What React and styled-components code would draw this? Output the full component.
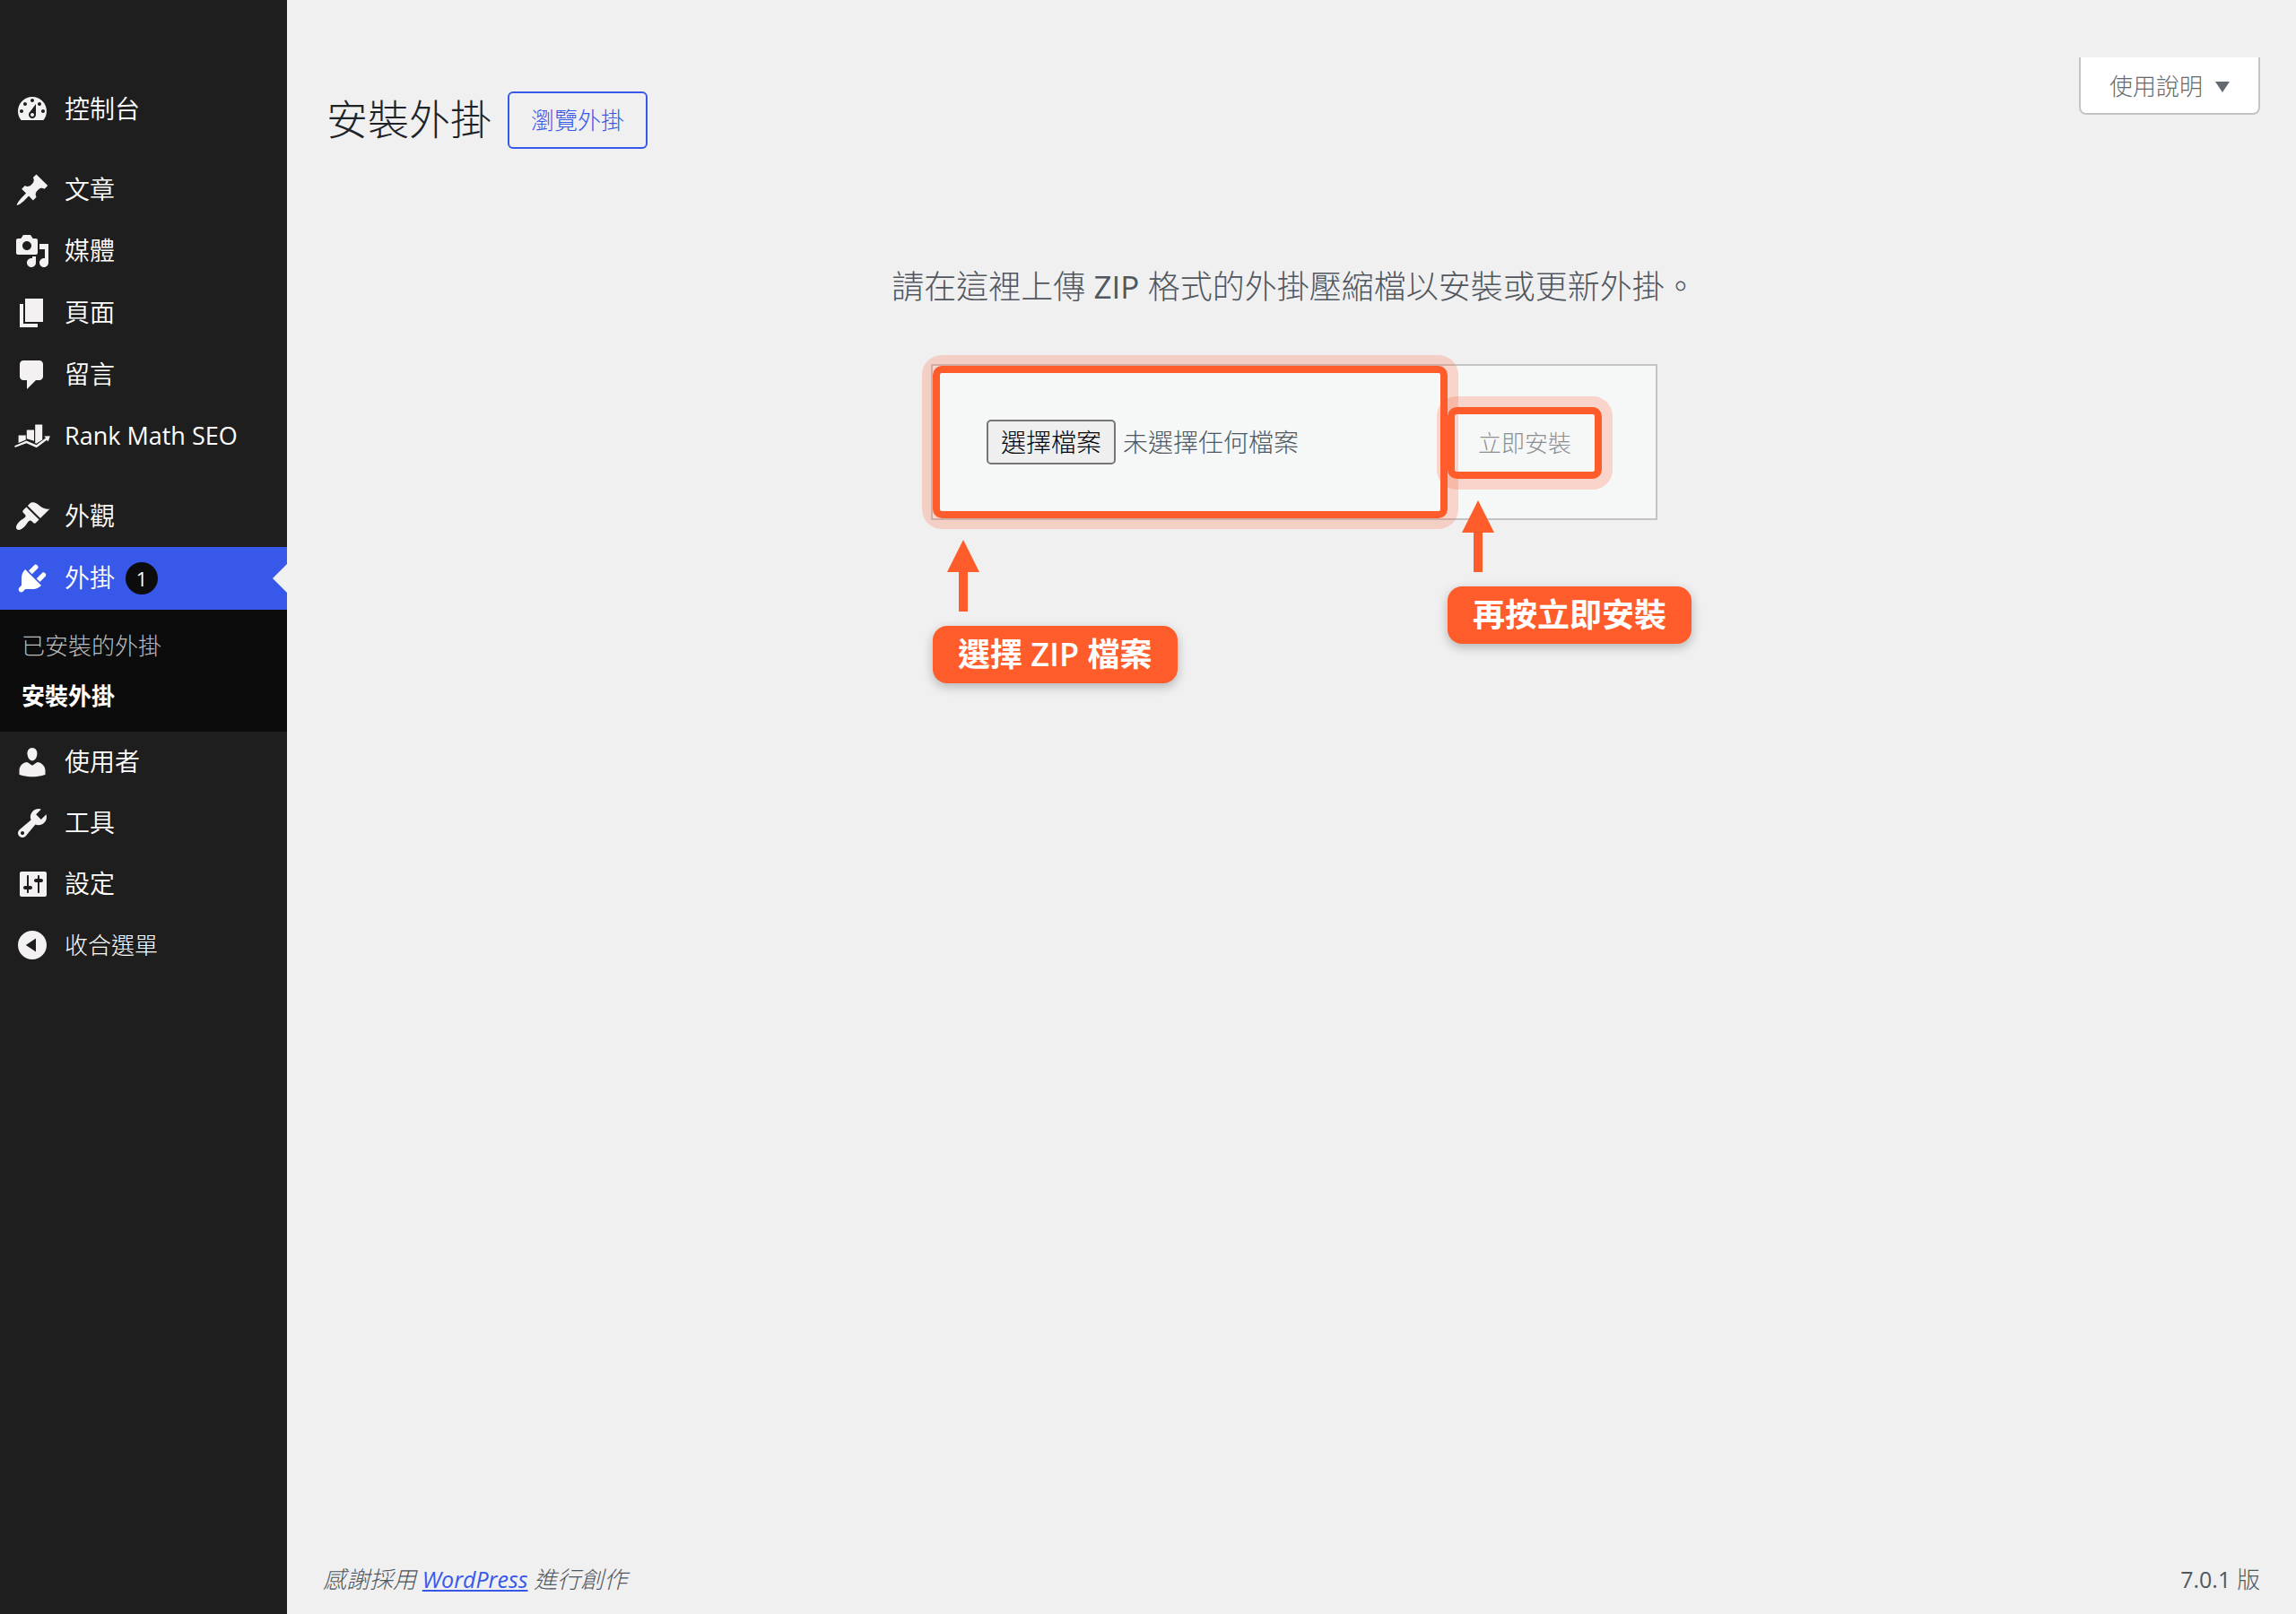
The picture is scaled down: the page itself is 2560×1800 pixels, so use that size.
import React, { useRef } from 'react';
import styled, { createGlobalStyle, css } from 'styled-components';

const icons = {
  dashboard: 'M3.76 16h12.48c1.1-1.37 1.76-3.11 1.76-5 0-4.42-3.58-8-8-8s-8 3.58-8 8c0 1.89.66 3.63 1.76 5zM10 4c.55 0 1 .45 1 1s-.45 1-1 1-1-.45-1-1 .45-1 1-1zM6 6c.55 0 1 .45 1 1s-.45 1-1 1-1-.45-1-1 .45-1 1-1zm8 0c.55 0 1 .45 1 1s-.45 1-1 1-1-.45-1-1 .45-1 1-1zm-5.37 5.55L12 7v6c0 1.1-.9 2-2 2s-2-.9-2-2c0-.57.24-1.08.63-1.45zM4 10c.55 0 1 .45 1 1s-.45 1-1 1-1-.45-1-1 .45-1 1-1zm12 0c.55 0 1 .45 1 1s-.45 1-1 1-1-.45-1-1 .45-1 1-1zm-5 3c0-.55-.45-1-1-1s-1 .45-1 1 .45 1 1 1 1-.45 1-1z',
  post: 'M10.44 3.02l1.82-1.82 6.36 6.35-1.83 1.82c-1.05-.68-2.48-.57-3.41.36l-.75.75c-.92.93-1.04 2.35-.35 3.41l-1.83 1.82-2.41-2.41-2.8 2.79c-.42.42-3.38 2.71-3.8 2.29s1.86-3.39 2.28-3.81l2.79-2.79L4.1 9.36l1.83-1.82c1.05.69 2.48.57 3.4-.36l.75-.75c.93-.92 1.05-2.35.36-3.41z',
  media: 'M13 11V4c0-.55-.45-1-1-1h-1.67L9 1H5L3.67 3H2c-.55 0-1 .45-1 1v7c0 .55.45 1 1 1h10c.55 0 1-.45 1-1zM7 4.5c1.38 0 2.5 1.12 2.5 2.5S8.38 9.5 7 9.5 4.5 8.38 4.5 7 5.62 4.5 7 4.5zM14 6h5v10.5c0 1.38-1.12 2.5-2.5 2.5S14 17.88 14 16.5s1.12-2.5 2.5-2.5c.17 0 .34.02.5.05V9h-3V6zm-4 8.05V13h2v3.5c0 1.38-1.12 2.5-2.5 2.5S7 17.88 7 16.5 8.12 14 9.5 14c.17 0 .34.02.5.05z',
  page: 'M6 15V2h10v13H6zm-1 1h8v2H3V5h2v11z',
  comments: 'M5 2h9c1.1 0 2 .9 2 2v7c0 1.1-.9 2-2 2h-2l-5 5v-5H5c-1.1 0-2-.9-2-2V4c0-1.1.9-2 2-2z',
  rankMath: 'M2.3 9.7h4.1v2.5L2.3 14zM6.9 6.7h4.1v6.2L6.9 11.6zM11.6 3.8h4v8.4l-3.4 2.2-.6-.3zM.1 15.6l6.6-2.9 5.6 2.4 5.2-3.9-.9-.9 3.3-.2-1 3.1-.8-.8-5.7 4.2-5.7-2.5L.4 16.5z',
  appearance: 'M14.48 11.06L7.41 3.99l1.5-1.5c.5-.56 2.3-.47 3.51.32 1.21.8 1.43 1.28 2.91 2.1 1.18.64 2.45 1.26 4.45.85zm-.71.71L6.7 4.7 4.93 6.47c-.39.39-.39 1.02 0 1.41l1.06 1.06c.39.39.39 1.03 0 1.42-.6.6-1.43 1.11-2.21 1.69-.35.26-.7.53-1.01.84C1.43 14.23.4 16.08 1.4 17.07c.99 1 2.84-.03 4.18-1.36.31-.31.58-.66.85-1.02.57-.78 1.08-1.61 1.69-2.21.39-.39 1.02-.39 1.41 0l1.06 1.06c.39.39 1.02.39 1.41 0z',
  plugins: 'M13.11 4.36L9.87 7.6 8 5.73l3.24-3.24c.35-.34 1.05-.2 1.56.32.52.51.66 1.21.31 1.55zm-8 1.77l.91-1.12 9.01 9.01-1.19.84c-.71.71-2.63 1.16-3.82 1.16H6.14L4.9 17.26c-.59.59-1.54.59-2.12 0-.59-.58-.59-1.53 0-2.12l1.24-1.24v-3.88c0-1.13.4-3.19 1.09-3.89zm7.26 3.97l3.24-3.24c.34-.35 1.04-.21 1.55.31.52.51.66 1.21.31 1.55l-3.24 3.25z',
  users: 'M10 9.25c-2.27 0-2.73-3.44-2.73-3.44C7 4.02 7.82 2 9.97 2c2.16 0 2.98 2.02 2.71 3.81 0 0-.41 3.44-2.68 3.44zm0 2.57L12.72 10c2.39 0 4.52 2.33 4.52 4.53v2.49s-3.65 1.13-7.24 1.13c-3.65 0-7.24-1.13-7.24-1.13v-2.49c0-2.25 1.94-4.48 4.47-4.48z',
  tools: 'M16.68 9.77c-1.34 1.34-3.3 1.67-4.95.99l-5.41 6.52c-.99.99-2.59.99-3.58 0s-.99-2.59 0-3.57l6.52-5.42c-.68-1.65-.35-3.61.99-4.95 1.28-1.28 3.12-1.62 4.72-1.06l-2.89 2.89 2.82 2.82 2.86-2.87c.53 1.58.18 3.39-1.08 4.65zM3.81 16.21c.4.39 1.04.39 1.43 0 .4-.4.4-1.04 0-1.43-.39-.4-1.03-.4-1.43 0-.39.39-.39 1.03 0 1.43z',
  settings: 'M18 16V4c0-.55-.45-1-1-1H4c-.55 0-1 .45-1 1v12c0 .55.45 1 1 1h13c.55 0 1-.45 1-1zM8 11h1c.55 0 1 .45 1 1s-.45 1-1 1H8v1.5c0 .28-.22.5-.5.5s-.5-.22-.5-.5V13H6c-.55 0-1-.45-1-1s.45-1 1-1h1V5.5c0-.28.22-.5.5-.5s.5.22.5.5V11zm5-2h-1c-.55 0-1-.45-1-1s.45-1 1-1h1V5.5c0-.28.22-.5.5-.5s.5.22.5.5V7h1c.55 0 1 .45 1 1s-.45 1-1 1h-1v5.5c0 .28-.22.5-.5.5s-.5-.22-.5-.5V9z',
  collapse: 'M10 2c4.42 0 8 3.58 8 8s-3.58 8-8 8-8-3.58-8-8 3.58-8 8-8zm2 11.7V6.3L6.4 10z',
};

const topItems = [
  { label: '文章', icon: 'post' },
  { label: '媒體', icon: 'media' },
  { label: '頁面', icon: 'page', tall: true },
  { label: '留言', icon: 'comments' },
  { label: <Latin $size={27}>Rank Math SEO</Latin>, icon: 'rankMath' },
];

const bottomItems = [
  { label: '使用者', icon: 'users' },
  { label: '工具', icon: 'tools' },
  { label: '設定', icon: 'settings' },
];

// the light weight is only meant for the Chinese text
function Latin({ $size, children }) {
  return <LatinText $size={$size}>{children}</LatinText>;
}

const Icon = ({ name }) => (
  <IconBox viewBox="0 0 20 20" aria-hidden="true">
    <path d={icons[name]} fillRule="evenodd" />
  </IconBox>
);

const MenuItem = ({ label, icon, tall, current, count, children }) => (
  <li>
    <MenuLink href="#" $tall={tall} $current={current}>
      <Icon name={icon} />
      <MenuText>{label}</MenuText>
      {count && <Count>{count}</Count>}
    </MenuLink>
    {children}
  </li>
);

const Callout = ({ children }) => (
  <CalloutBox>
    <Arrow viewBox="0 0 36 80" aria-hidden="true">
      <path d="M18 0L36 36H23V80H13V36H0z" />
    </Arrow>
    <CalloutText>{children}</CalloutText>
  </CalloutBox>
);

const App = () => {
  const fileInput = useRef(null);

  return (
    <>
      <GlobalStyle />
      <Page>
        <Sidebar>
          <Menu>
            <MenuItem label="控制台" icon="dashboard" />
            <Separator />
            {topItems.map((item) => <MenuItem key={item.icon} {...item} />)}
            <Separator />
            <MenuItem label="外觀" icon="appearance" />
            <MenuItem label="外掛" icon="plugins" count={1} current tall>
              <Submenu>
                <li><SubLink href="#">已安裝的外掛</SubLink></li>
                <li><SubLink href="#" $current>安裝外掛</SubLink></li>
              </Submenu>
            </MenuItem>
            {bottomItems.map((item) => <MenuItem key={item.icon} {...item} />)}
            <li>
              <CollapseButton type="button">
                <Icon name="collapse" />
                收合選單
              </CollapseButton>
            </li>
          </Menu>
        </Sidebar>

        <Main>
          <Header>
            <TitleGroup>
              <h1>安裝外掛</h1>
              <BrowseLink href="#">瀏覽外掛</BrowseLink>
            </TitleGroup>
            <HelpButton type="button">
              使用說明
              <Caret viewBox="0 0 16 12" aria-hidden="true">
                <path d="M0 0H16L8 12z" />
              </Caret>
            </HelpButton>
          </Header>

          <Upload>
            <Intro>請在這裡上傳 <Latin $size={35}>ZIP</Latin> 格式的外掛壓縮檔以安裝或更新外掛。</Intro>
            <UploadForm onSubmit={(e) => e.preventDefault()}>
              <FileFrame>
                <input type="file" accept=".zip" aria-label="外掛 ZIP 檔案" ref={fileInput} hidden />
                <ChooseButton type="button" onClick={() => fileInput.current.click()}>選擇檔案</ChooseButton>
                <span>未選擇任何檔案</span>
                <Callout>選擇 ZIP 檔案</Callout>
              </FileFrame>
              <InstallFrame>
                <InstallButton type="submit" disabled>立即安裝</InstallButton>
                <Callout>再按立即安裝</Callout>
              </InstallFrame>
            </UploadForm>
          </Upload>

          <Footer>
            <em>感謝採用 <a href="#"><Latin $size={25}>WordPress</Latin></a> 進行創作</em>
            <span><Latin $size={25}>7.0.1</Latin> 版</span>
          </Footer>
        </Main>
      </Page>
    </>
  );
};

export default App;

const GlobalStyle = createGlobalStyle`
  * {
    box-sizing: border-box;
  }

  body {
    margin: 0;
    background: #f0f0f0;
    color: #50575e;
    font-family: 'Open Sans', 'Noto Sans CJK TC', sans-serif;
    font-size: 26px;
    font-weight: 300;
    line-height: 38px;
  }

  button {
    font: inherit;
    cursor: pointer;
  }

  ul {
    list-style: none;
    margin: 0;
    padding: 0;
  }
`;

const LatinText = styled.span`
  font-size: ${({ $size }) => $size}px;
  font-weight: 400;
`;

const Page = styled.div`
  display: flex;
  min-height: 100vh;
`;

const Sidebar = styled.nav`
  flex: 0 0 320px;
  padding-top: 88px;
  background: #1e1e1e;
`;

const Menu = styled.ul`
  color: #fff;
`;

const Separator = styled.li`
  height: 22px;
`;

const menuRow = css`
  display: flex;
  align-items: center;
  width: 100%;
  height: 68px;
  padding: 0 16px;
  color: #fff;
  text-decoration: none;
`;

const MenuLink = styled.a`
  ${menuRow}
  font-size: 28px;
  font-weight: 350;

  ${({ $tall }) => $tall && 'height: 70px;'}

  ${({ $current }) => $current && css`
    position: relative;
    background: #3858e9;

    &::after {
      content: '';
      position: absolute;
      right: 0;
      top: calc(50% - 16px);
      border: 16px solid transparent;
      border-left: 0;
      border-right-color: #f0f0f0;
    }

    svg {
      fill: #fff;
    }
  `}
`;

const MenuText = styled.span`
  padding-bottom: 2px;
`;

const CollapseButton = styled.button`
  ${menuRow}
  border: 0;
  background: none;
`;

const IconBox = styled.svg`
  flex: none;
  width: 40px;
  height: 40px;
  margin-right: 16px;
  fill: #f3f1f1;
`;

const Count = styled.span`
  width: 36px;
  height: 36px;
  margin-left: 12px;
  border-radius: 50%;
  background: #0c0c0c;
  font-size: 22px;
  font-weight: 400;
  line-height: 36px;
  text-align: center;
`;

const Submenu = styled.ul`
  padding: 12px 0;
  background: #0c0c0c;
`;

const SubLink = styled.a`
  display: block;
  padding: 9px 24px;
  color: ${({ $current }) => ($current ? '#fff' : '#bcbcbc')};
  font-weight: ${({ $current }) => ($current ? 600 : 300)};
  text-decoration: none;
`;

const Main = styled.main`
  flex: 1;
  display: flex;
  flex-direction: column;
  padding: 64px 40px 20px 44px;
`;

const Header = styled.header`
  display: flex;
  justify-content: space-between;
  align-items: flex-start;
`;

const TitleGroup = styled.div`
  display: flex;
  align-items: flex-start;
  gap: 18px;
  margin-top: 38px;

  h1 {
    margin: 0;
    color: #1d2327;
    font-size: 46px;
    font-weight: 300;
    line-height: 60px;
  }
`;

const BrowseLink = styled.a`
  padding: 11px 24px;
  border: 2px solid #3858e9;
  border-radius: 6px;
  color: #3858e9;
  text-decoration: none;
`;

const HelpButton = styled.button`
  display: flex;
  align-items: center;
  gap: 14px;
  height: 64px;
  padding: 2px 32px 0;
  border: 2px solid #c3c4c7;
  border-top: 0;
  border-radius: 0 0 8px 8px;
  background: #fff;
  color: #646970;
`;

const Caret = styled.svg`
  width: 16px;
  height: 12px;
  margin-top: 2px;
  fill: #646970;
`;

const Upload = styled.section`
  display: flex;
  flex-direction: column;
  align-items: center;
  margin-top: 132px;
  padding-left: 2px;
`;

const Intro = styled.p`
  margin: 0 0 64px;
  font-size: 36px;
  line-height: 44px;
`;

const UploadForm = styled.form`
  display: flex;
  align-items: center;
  width: 100%;
  max-width: 810px;
  padding-right: 60px;
  border: 2px solid #c3c4c7;
  background: #f6f7f7;
`;

const Frame = styled.div`
  position: relative;
  display: flex;
  align-items: center;
  border: 8px solid #ff5c2c;
  border-radius: 10px;
  box-shadow: 0 0 0 12px rgba(255, 92, 44, 0.22);
`;

const FileFrame = styled(Frame)`
  flex: 1;
  gap: 8px;
  padding: 52px;
  font-size: 28px;
`;

const ChooseButton = styled.button`
  padding: 4px 14px;
  border: 2px solid #767676;
  border-radius: 5px;
  background: #efefef;
  color: #000;
`;

const InstallFrame = styled(Frame)`
  height: 80px;
  margin-top: 2px;
`;

const InstallButton = styled.button`
  padding: 0 26px;
  border: 0;
  background: none;
  color: #8c8f94;
`;

const CalloutBox = styled.div`
  position: absolute;
  left: -8px;
  top: calc(100% + 32px);
`;

const Arrow = styled.svg`
  display: block;
  width: 36px;
  height: 80px;
  margin: 0 0 16px 16px;
  fill: #ff5c2c;
`;

const CalloutText = styled.div`
  padding: 10px 28px;
  border-radius: 16px;
  background: #ff5c2c;
  box-shadow: 0 4px 12px rgba(0, 0, 0, 0.25);
  color: #fff;
  font-size: 36px;
  font-weight: 600;
  line-height: 44px;
  white-space: nowrap;
`;

const Footer = styled.footer`
  display: flex;
  justify-content: space-between;
  margin: auto 0 0 -4px;

  a {
    color: #3858e9;
  }
`;
